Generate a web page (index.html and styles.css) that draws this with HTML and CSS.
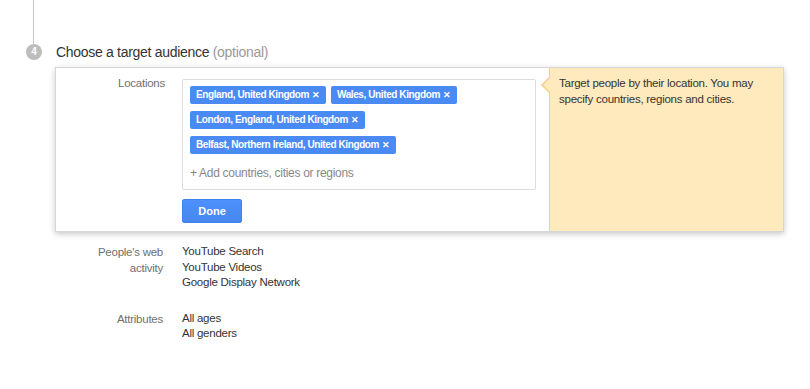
FILE: index.html
```html
<!DOCTYPE html>
<html lang="en">
<head>
  <meta charset="UTF-8">
  <meta name="viewport" content="width=device-width, initial-scale=1.0">
  <title>Choose a target audience</title>
  <link rel="stylesheet" href="styles.css">
</head>
<body>
  <div class="step-line"></div>
  <div class="step-head">
    <span class="step-num">4</span>
    <h2 class="step-title">Choose a target audience <span class="optional">(optional)</span></h2>
  </div>

  <div class="card">
    <div class="card-main">
      <div class="row">
        <label class="row-label loc-label" for="loc-input">Locations</label>
        <div class="row-field">
          <div class="chip-box">
            <div class="chips">
              <span class="chip">England, United Kingdom <span class="chip-x">&#10005;</span></span>
              <span class="chip">Wales, United Kingdom <span class="chip-x">&#10005;</span></span>
              <span class="chip">London, England, United Kingdom <span class="chip-x">&#10005;</span></span>
              <span class="chip">Belfast, Northern Ireland, United Kingdom <span class="chip-x">&#10005;</span></span>
            </div>
            <input id="loc-input" class="chip-input" type="text" placeholder="+ Add countries, cities or regions">
          </div>
          <button type="button" class="btn-done">Done</button>
        </div>
      </div>
    </div>
    <div class="card-tip">
      Target people by their location. You may specify countries, regions and cities.
    </div>
  </div>

  <div class="summary">
    <div class="row">
      <div class="row-label">People's web activity</div>
      <div class="row-value">
        <div>YouTube Search</div>
        <div>YouTube Videos</div>
        <div>Google Display Network</div>
      </div>
    </div>
    <div class="row">
      <div class="row-label">Attributes</div>
      <div class="row-value">
        <div>All ages</div>
        <div>All genders</div>
      </div>
    </div>
  </div>
</body>
</html>
```

FILE: styles.css
```css
body {
  margin: 0;
  font-family: "Liberation Sans", Arial, sans-serif;
  font-size: 11.5px;
  letter-spacing: -0.25px;
  color: #333;
  background: #fff;
}
.step-line {
  width: 1px;
  height: 44px;
  margin-left: 33px;
  background-color: #c6c6c6;
}
.step-head {
  display: flex;
  align-items: center;
  height: 16px;
}
.step-num {
  width: 16px;
  height: 16px;
  margin-left: 26px;
  border-radius: 50%;
  background-color: #bdbdbd;
  color: #fff;
  font-size: 10px;
  font-weight: bold;
  letter-spacing: 0;
  line-height: 16px;
  text-align: center;
}
.step-title {
  margin: 0 0 0 14px;
  font-size: 14px;
  font-weight: normal;
  letter-spacing: -0.3px;
  color: #333;
}
.optional {
  color: #999;
}

.card {
  display: flex;
  width: 729px;
  margin: 7px 0 0 55px;
  background: #fff;
  border: 1px solid #d6d6d6;
  box-shadow: 0 2px 6px rgba(0, 0, 0, 0.22);
  box-sizing: border-box;
}
.card-main {
  width: 493px;
  padding: 11px 0 8px 0;
}
.row {
  display: flex;
  gap: 17px;
}
.row-label {
  width: 70px;
  margin-left: 39px;
  text-align: right;
  color: #707070;
  line-height: 16px;
}
.loc-label {
  margin-top: -4px;
}
.row-field {
  width: 354px;
}
.chip-box {
  border: 1px solid #dcdcdc;
  border-radius: 2px;
  padding: 6px 7px 8px 7px;
}
.chips {
  display: flex;
  flex-wrap: wrap;
  gap: 7px 5px;
}
.chip {
  height: 18px;
  padding: 0 6px;
  border-radius: 2px;
  background-color: #4a8af4;
  color: #fff;
  font-size: 10px;
  font-weight: bold;
  letter-spacing: -0.4px;
  line-height: 18px;
  white-space: nowrap;
}
.chip-x {
  font-size: 9px;
  margin-left: 1px;
}
.chip-input {
  display: block;
  width: 100%;
  margin-top: 11px;
  padding: 0;
  border: none;
  outline: none;
  font-family: inherit;
  font-size: 12px;
  letter-spacing: -0.3px;
  line-height: 16px;
  color: #333;
}
.chip-input::placeholder {
  color: #888;
}
.btn-done {
  display: block;
  width: 60px;
  height: 24px;
  margin-top: 9px;
  border: 1px solid #3d82f0;
  border-radius: 2px;
  background: linear-gradient(#4d90fe, #4787ed);
  color: #fff;
  font-family: inherit;
  font-size: 11px;
  font-weight: bold;
  cursor: pointer;
}

.card-tip {
  position: relative;
  flex: 1;
  padding: 7px 30px 0 9px;
  background-color: #feeabd;
  border-left: 1px solid #f9cd85;
  line-height: 16px;
  color: #333;
}
.card-tip::before,
.card-tip::after {
  content: "";
  position: absolute;
  top: 9px;
  border-style: solid;
  border-color: transparent;
}
.card-tip::before {
  left: -9px;
  border-width: 8px 8px 8px 0;
  border-right-color: #f9cd85;
}
.card-tip::after {
  left: -7px;
  border-width: 8px 8px 8px 0;
  border-right-color: #feeabd;
}

.summary {
  margin: 12px 0 0 57px;
  display: flex;
  flex-direction: column;
  gap: 20px;
}
.summary .row-label {
  margin-left: 36px;
  padding-right: 2px;
}
.row-value {
  line-height: 15.5px;
  color: #333;
}
```
